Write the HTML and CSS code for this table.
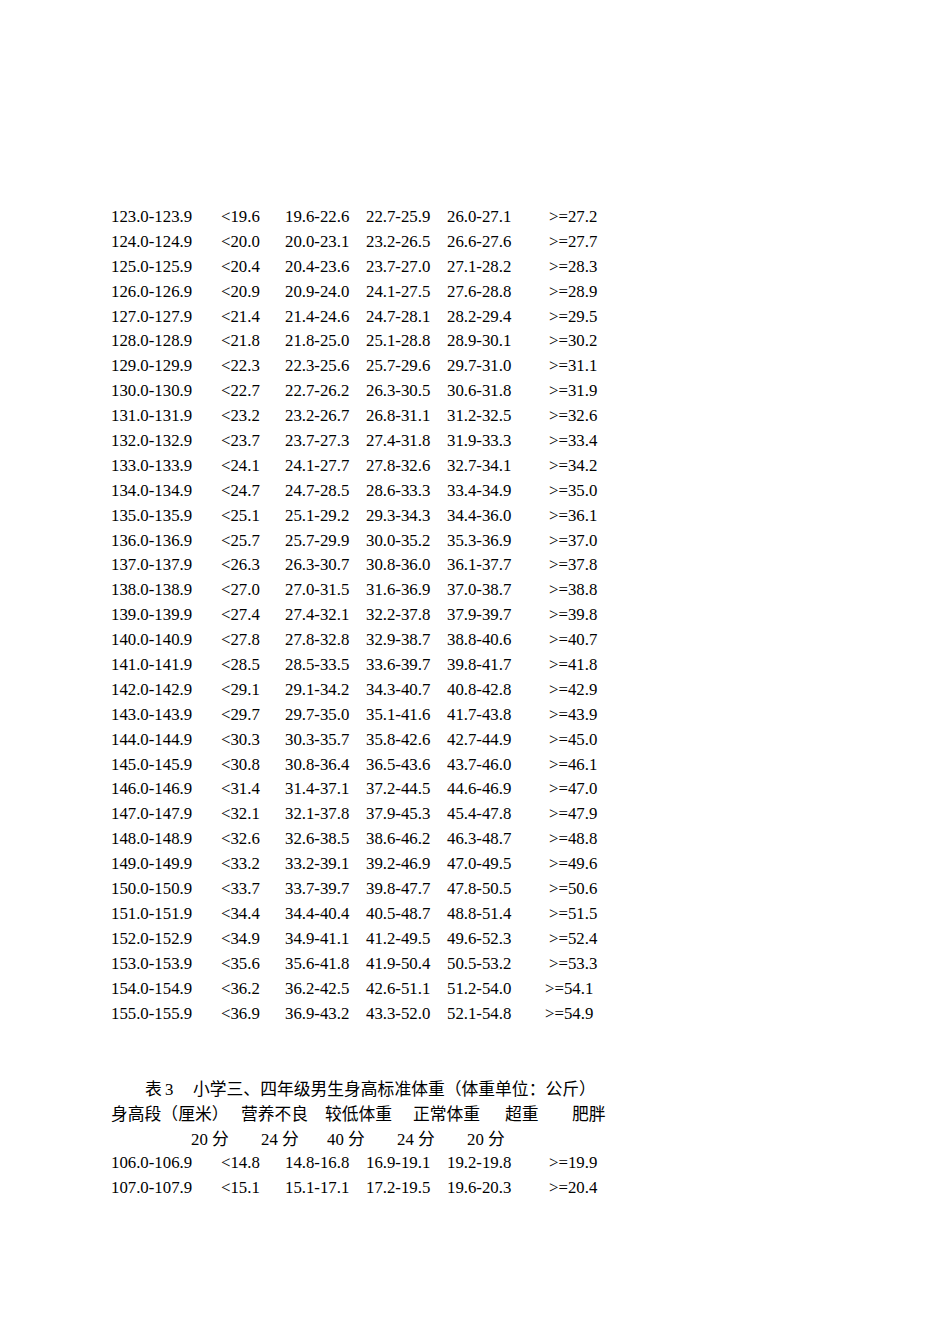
FILE: index.html
```html
<!DOCTYPE html>
<html lang="zh-CN">
<head>
<meta charset="utf-8">
<title>身高标准体重</title>
<link rel="stylesheet" href="styles.css">
</head>
<body>
<div class="page">
  <div class="table">
    <div class="row"><span class="c1">123.0-123.9</span><span class="c2">&lt;19.6</span><span class="c3">19.6-22.6</span><span class="c4">22.7-25.9</span><span class="c5">26.0-27.1</span><span class="c6">&gt;=27.2</span></div>
    <div class="row"><span class="c1">124.0-124.9</span><span class="c2">&lt;20.0</span><span class="c3">20.0-23.1</span><span class="c4">23.2-26.5</span><span class="c5">26.6-27.6</span><span class="c6">&gt;=27.7</span></div>
    <div class="row"><span class="c1">125.0-125.9</span><span class="c2">&lt;20.4</span><span class="c3">20.4-23.6</span><span class="c4">23.7-27.0</span><span class="c5">27.1-28.2</span><span class="c6">&gt;=28.3</span></div>
    <div class="row"><span class="c1">126.0-126.9</span><span class="c2">&lt;20.9</span><span class="c3">20.9-24.0</span><span class="c4">24.1-27.5</span><span class="c5">27.6-28.8</span><span class="c6">&gt;=28.9</span></div>
    <div class="row"><span class="c1">127.0-127.9</span><span class="c2">&lt;21.4</span><span class="c3">21.4-24.6</span><span class="c4">24.7-28.1</span><span class="c5">28.2-29.4</span><span class="c6">&gt;=29.5</span></div>
    <div class="row"><span class="c1">128.0-128.9</span><span class="c2">&lt;21.8</span><span class="c3">21.8-25.0</span><span class="c4">25.1-28.8</span><span class="c5">28.9-30.1</span><span class="c6">&gt;=30.2</span></div>
    <div class="row"><span class="c1">129.0-129.9</span><span class="c2">&lt;22.3</span><span class="c3">22.3-25.6</span><span class="c4">25.7-29.6</span><span class="c5">29.7-31.0</span><span class="c6">&gt;=31.1</span></div>
    <div class="row"><span class="c1">130.0-130.9</span><span class="c2">&lt;22.7</span><span class="c3">22.7-26.2</span><span class="c4">26.3-30.5</span><span class="c5">30.6-31.8</span><span class="c6">&gt;=31.9</span></div>
    <div class="row"><span class="c1">131.0-131.9</span><span class="c2">&lt;23.2</span><span class="c3">23.2-26.7</span><span class="c4">26.8-31.1</span><span class="c5">31.2-32.5</span><span class="c6">&gt;=32.6</span></div>
    <div class="row"><span class="c1">132.0-132.9</span><span class="c2">&lt;23.7</span><span class="c3">23.7-27.3</span><span class="c4">27.4-31.8</span><span class="c5">31.9-33.3</span><span class="c6">&gt;=33.4</span></div>
    <div class="row"><span class="c1">133.0-133.9</span><span class="c2">&lt;24.1</span><span class="c3">24.1-27.7</span><span class="c4">27.8-32.6</span><span class="c5">32.7-34.1</span><span class="c6">&gt;=34.2</span></div>
    <div class="row"><span class="c1">134.0-134.9</span><span class="c2">&lt;24.7</span><span class="c3">24.7-28.5</span><span class="c4">28.6-33.3</span><span class="c5">33.4-34.9</span><span class="c6">&gt;=35.0</span></div>
    <div class="row"><span class="c1">135.0-135.9</span><span class="c2">&lt;25.1</span><span class="c3">25.1-29.2</span><span class="c4">29.3-34.3</span><span class="c5">34.4-36.0</span><span class="c6">&gt;=36.1</span></div>
    <div class="row"><span class="c1">136.0-136.9</span><span class="c2">&lt;25.7</span><span class="c3">25.7-29.9</span><span class="c4">30.0-35.2</span><span class="c5">35.3-36.9</span><span class="c6">&gt;=37.0</span></div>
    <div class="row"><span class="c1">137.0-137.9</span><span class="c2">&lt;26.3</span><span class="c3">26.3-30.7</span><span class="c4">30.8-36.0</span><span class="c5">36.1-37.7</span><span class="c6">&gt;=37.8</span></div>
    <div class="row"><span class="c1">138.0-138.9</span><span class="c2">&lt;27.0</span><span class="c3">27.0-31.5</span><span class="c4">31.6-36.9</span><span class="c5">37.0-38.7</span><span class="c6">&gt;=38.8</span></div>
    <div class="row"><span class="c1">139.0-139.9</span><span class="c2">&lt;27.4</span><span class="c3">27.4-32.1</span><span class="c4">32.2-37.8</span><span class="c5">37.9-39.7</span><span class="c6">&gt;=39.8</span></div>
    <div class="row"><span class="c1">140.0-140.9</span><span class="c2">&lt;27.8</span><span class="c3">27.8-32.8</span><span class="c4">32.9-38.7</span><span class="c5">38.8-40.6</span><span class="c6">&gt;=40.7</span></div>
    <div class="row"><span class="c1">141.0-141.9</span><span class="c2">&lt;28.5</span><span class="c3">28.5-33.5</span><span class="c4">33.6-39.7</span><span class="c5">39.8-41.7</span><span class="c6">&gt;=41.8</span></div>
    <div class="row"><span class="c1">142.0-142.9</span><span class="c2">&lt;29.1</span><span class="c3">29.1-34.2</span><span class="c4">34.3-40.7</span><span class="c5">40.8-42.8</span><span class="c6">&gt;=42.9</span></div>
    <div class="row"><span class="c1">143.0-143.9</span><span class="c2">&lt;29.7</span><span class="c3">29.7-35.0</span><span class="c4">35.1-41.6</span><span class="c5">41.7-43.8</span><span class="c6">&gt;=43.9</span></div>
    <div class="row"><span class="c1">144.0-144.9</span><span class="c2">&lt;30.3</span><span class="c3">30.3-35.7</span><span class="c4">35.8-42.6</span><span class="c5">42.7-44.9</span><span class="c6">&gt;=45.0</span></div>
    <div class="row"><span class="c1">145.0-145.9</span><span class="c2">&lt;30.8</span><span class="c3">30.8-36.4</span><span class="c4">36.5-43.6</span><span class="c5">43.7-46.0</span><span class="c6">&gt;=46.1</span></div>
    <div class="row"><span class="c1">146.0-146.9</span><span class="c2">&lt;31.4</span><span class="c3">31.4-37.1</span><span class="c4">37.2-44.5</span><span class="c5">44.6-46.9</span><span class="c6">&gt;=47.0</span></div>
    <div class="row"><span class="c1">147.0-147.9</span><span class="c2">&lt;32.1</span><span class="c3">32.1-37.8</span><span class="c4">37.9-45.3</span><span class="c5">45.4-47.8</span><span class="c6">&gt;=47.9</span></div>
    <div class="row"><span class="c1">148.0-148.9</span><span class="c2">&lt;32.6</span><span class="c3">32.6-38.5</span><span class="c4">38.6-46.2</span><span class="c5">46.3-48.7</span><span class="c6">&gt;=48.8</span></div>
    <div class="row"><span class="c1">149.0-149.9</span><span class="c2">&lt;33.2</span><span class="c3">33.2-39.1</span><span class="c4">39.2-46.9</span><span class="c5">47.0-49.5</span><span class="c6">&gt;=49.6</span></div>
    <div class="row"><span class="c1">150.0-150.9</span><span class="c2">&lt;33.7</span><span class="c3">33.7-39.7</span><span class="c4">39.8-47.7</span><span class="c5">47.8-50.5</span><span class="c6">&gt;=50.6</span></div>
    <div class="row"><span class="c1">151.0-151.9</span><span class="c2">&lt;34.4</span><span class="c3">34.4-40.4</span><span class="c4">40.5-48.7</span><span class="c5">48.8-51.4</span><span class="c6">&gt;=51.5</span></div>
    <div class="row"><span class="c1">152.0-152.9</span><span class="c2">&lt;34.9</span><span class="c3">34.9-41.1</span><span class="c4">41.2-49.5</span><span class="c5">49.6-52.3</span><span class="c6">&gt;=52.4</span></div>
    <div class="row"><span class="c1">153.0-153.9</span><span class="c2">&lt;35.6</span><span class="c3">35.6-41.8</span><span class="c4">41.9-50.4</span><span class="c5">50.5-53.2</span><span class="c6">&gt;=53.3</span></div>
    <div class="row"><span class="c1">154.0-154.9</span><span class="c2">&lt;36.2</span><span class="c3">36.2-42.5</span><span class="c4">42.6-51.1</span><span class="c5">51.2-54.0</span><span class="c6 shift">&gt;=54.1</span></div>
    <div class="row"><span class="c1">155.0-155.9</span><span class="c2">&lt;36.9</span><span class="c3">36.9-43.2</span><span class="c4">43.3-52.0</span><span class="c5">52.1-54.8</span><span class="c6 shift">&gt;=54.9</span></div>
  </div>

  <div class="title"><span class="t-label">表</span><span class="t-num">3</span><span class="t-text">小学三、四年级男生身高标准体重（体重单位：公斤）</span></div>
  <div class="head"><span class="h1">身高段（厘米）</span><span class="h2">营养不良</span><span class="h3">较低体重</span><span class="h4">正常体重</span><span class="h5">超重</span><span class="h6">肥胖</span></div>
  <div class="scores"><span class="s1">20 分</span><span class="s2">24 分</span><span class="s3">40 分</span><span class="s4">24 分</span><span class="s5">20 分</span></div>

  <div class="table">
    <div class="row"><span class="c1">106.0-106.9</span><span class="c2">&lt;14.8</span><span class="c3">14.8-16.8</span><span class="c4">16.9-19.1</span><span class="c5">19.2-19.8</span><span class="c6">&gt;=19.9</span></div>
    <div class="row"><span class="c1">107.0-107.9</span><span class="c2">&lt;15.1</span><span class="c3">15.1-17.1</span><span class="c4">17.2-19.5</span><span class="c5">19.6-20.3</span><span class="c6">&gt;=20.4</span></div>
  </div>
</div>
</body>
</html>
```

FILE: styles.css
```css
html, body {
  margin: 0;
  padding: 0;
  background: #ffffff;
}

body {
  width: 950px;
  min-height: 1344px;
  color: #000000;
  font-family: "Liberation Serif", "Noto Sans CJK SC", serif;
  font-size: 16.8px;
  line-height: 24.9px;
}

.page {
  padding: 205px 0 0 111px;
}

.row {
  display: flex;
  white-space: pre;
  height: 24.9px;
}

.head,
.scores,
.title {
  display: flex;
  white-space: pre;
  height: 22.9px;
  padding-top: 2px;
}

.c1 { width: 110px; }
.c2 { width: 64px; }
.c3 { width: 81px; }
.c4 { width: 81px; }
.c5 { width: 102px; }
.c6 { width: 60px; }
.c6.shift { margin-left: -4px; }

.title {
  margin-top: 49.8px;
  padding-left: 34px;
}
.t-label { width: 20px; }
.t-num { width: 28px; }

.head .h1 { width: 130px; }
.head .h2 { width: 84px; }
.head .h3 { width: 88px; }
.head .h4 { width: 92px; }
.head .h5 { width: 67px; }

.scores { padding-left: 80px; }
.scores span { display: inline-block; }
.scores .s1 { width: 70px; }
.scores .s2 { width: 66px; }
.scores .s3 { width: 70px; }
.scores .s4 { width: 70px; }
```
